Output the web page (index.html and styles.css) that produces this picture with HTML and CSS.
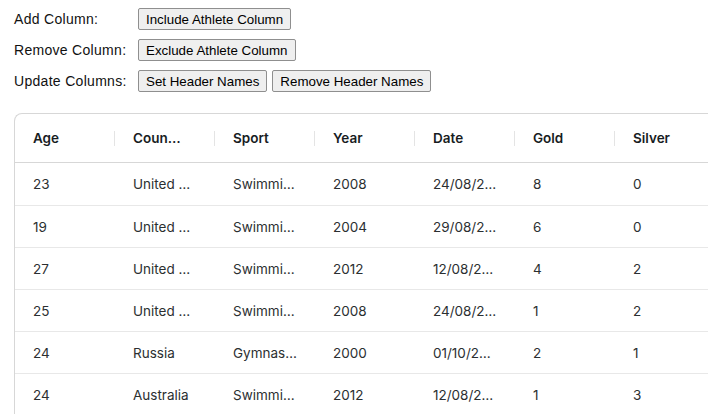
FILE: index.html
```html
<!DOCTYPE html>
<html lang="en">
<head>
    <meta charset="UTF-8" />
    <title>Column Definitions</title>
    <link rel="stylesheet" href="styles.css">
</head>
<body>

    <div class="controles">
        <div class="fila">
            <span class="etiqueta">Add Column:</span>
            <button>Include Athlete Column</button>
        </div>
        <div class="fila">
            <span class="etiqueta">Remove Column:</span>
            <button>Exclude Athlete Column</button>
        </div>
        <div class="fila">
            <span class="etiqueta">Update Columns:</span>
            <button>Set Header Names</button>
            <button>Remove Header Names</button>
        </div>
    </div>

    <div class="grid">
        <div class="grid-header">
            <div class="celda-header">Age</div>
            <div class="celda-header">Country</div>
            <div class="celda-header">Sport</div>
            <div class="celda-header">Year</div>
            <div class="celda-header">Date</div>
            <div class="celda-header">Gold</div>
            <div class="celda-header">Silver</div>
        </div>

        <div class="grid-fila primera">
            <div class="celda">23</div><div class="celda">United States</div><div class="celda">Swimming</div><div class="celda">2008</div><div class="celda">24/08/2008</div><div class="celda">8</div><div class="celda">0</div>
        </div>
        <div class="grid-fila">
            <div class="celda">19</div><div class="celda">United States</div><div class="celda">Swimming</div><div class="celda">2004</div><div class="celda">29/08/2004</div><div class="celda">6</div><div class="celda">0</div>
        </div>
        <div class="grid-fila">
            <div class="celda">27</div><div class="celda">United States</div><div class="celda">Swimming</div><div class="celda">2012</div><div class="celda">12/08/2012</div><div class="celda">4</div><div class="celda">2</div>
        </div>
        <div class="grid-fila">
            <div class="celda">25</div><div class="celda">United States</div><div class="celda">Swimming</div><div class="celda">2008</div><div class="celda">24/08/2008</div><div class="celda">1</div><div class="celda">2</div>
        </div>
        <div class="grid-fila">
            <div class="celda">24</div><div class="celda">Russia</div><div class="celda">Gymnastics</div><div class="celda">2000</div><div class="celda">01/10/2000</div><div class="celda">2</div><div class="celda">1</div>
        </div>
        <div class="grid-fila">
            <div class="celda">24</div><div class="celda">Australia</div><div class="celda">Swimming</div><div class="celda">2012</div><div class="celda">12/08/2012</div><div class="celda">1</div><div class="celda">3</div>
        </div>
    </div>

</body>
</html>
```

FILE: styles.css
```css
html {
    overflow: hidden;
}

body {
    margin: 0;
    padding: 8px 0 0 14px;
    height: 414px;
    overflow: hidden;
    background-color: #ffffff;
    font-family: "Liberation Sans", Arial, sans-serif;
}

.controles {
    display: flex;
    flex-direction: column;
    gap: 9px;
}

.fila {
    display: flex;
    align-items: center;
    gap: 5px;
    height: 22px;
}

.etiqueta {
    width: 119px;
    font-size: 14px;
    color: #111;
    letter-spacing: 0.3px;
}

button {
    font-family: "Liberation Sans", Arial, sans-serif;
    font-size: 13.33px;
    height: 22px;
    padding: 1px 7px;
    background-color: #efefef;
    border: 1px solid #8f8f8f;
    border-radius: 2px;
    color: #000;
    cursor: pointer;
}

button:hover {
    background-color: #e5e5e5;
}

.grid {
    margin-top: 21px;
    width: 720px;
    border: 1px solid #d7d7d7;
    border-right: none;
    border-radius: 8px 0 0 0;
    font-family: Inter, "Noto Sans", sans-serif;
    font-size: 14px;
    color: #181d1f;
}

.grid-header {
    display: flex;
    height: 48px;
    border-bottom: 1px solid #d7d7d7;
}

.celda-header {
    position: relative;
    width: 100px;
    padding: 0 32px 0 18px;
    box-sizing: border-box;
    font-weight: 600;
    font-size: 13.5px;
    line-height: 48px;
    white-space: nowrap;
    overflow: hidden;
    text-overflow: ellipsis;
}

.celda-header:last-child {
    padding-right: 18px;
}

.celda-header::after {
    content: "";
    position: absolute;
    right: -1px;
    top: 17px;
    width: 2px;
    height: 15px;
    background-color: #e4e4e4;
}

.grid-fila {
    display: flex;
    height: 41px;
    border-bottom: 1px solid #e8e8e8;
}

.grid-fila.primera {
    height: 42px;
}

.celda {
    width: 100px;
    padding: 1px 18px 0;
    box-sizing: border-box;
    line-height: 41px;
    font-size: 13.5px;
    color: #2b2f31;
    white-space: nowrap;
    overflow: hidden;
    text-overflow: ellipsis;
}
```
